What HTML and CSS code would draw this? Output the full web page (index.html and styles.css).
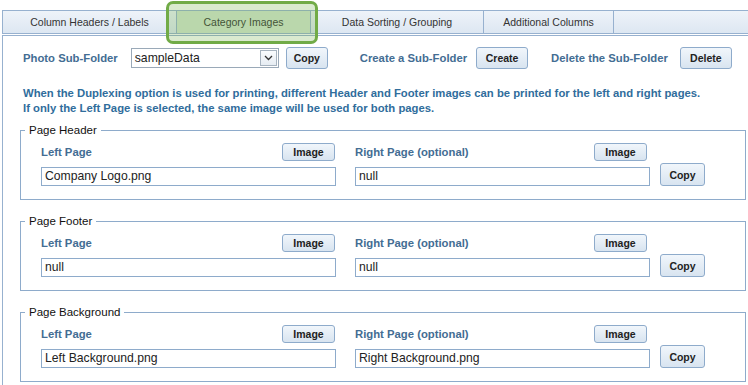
FILE: index.html
```html
<!DOCTYPE html>
<html lang="en">
<head>
  <meta charset="UTF-8" />
  <title>Category Images</title>
  <link rel="stylesheet" href="styles.css">
</head>
<body>
  <div class="wrap">
    <ul class="tabs">
      <li class="tab tab-1">Column Headers / Labels</li>
      <li class="tab tab-2 active">Category Images</li>
      <li class="tab tab-3">Data Sorting / Grouping</li>
      <li class="tab tab-4">Additional Columns</li>
    </ul>

    <div class="content">
      <div class="folder-row">
        <span class="label">Photo Sub-Folder</span>
        <div class="select">
          <span class="select-text">sampleData</span>
          <span class="select-arrow">
            <svg width="9" height="6" viewBox="0 0 9 6"><path d="M1 1 L4.5 4.5 L8 1" fill="none" stroke="#333" stroke-width="1.3"/></svg>
          </span>
        </div>
        <button class="btn btn-copy-folder">Copy</button>
        <span class="label create-label">Create a Sub-Folder</span>
        <button class="btn btn-create">Create</button>
        <span class="label delete-label">Delete the Sub-Folder</span>
        <button class="btn btn-delete">Delete</button>
      </div>

      <p class="info">
        When the Duplexing option is used for printing, different Header and Footer images can be printed for the left and right pages.<br>
        If only the Left Page is selected, the same image will be used for both pages.
      </p>

      <fieldset class="group">
        <legend>Page Header</legend>
        <div class="group-row">
          <div class="col">
            <div class="col-head"><span class="label">Left Page</span><button class="btn btn-image">Image</button></div>
            <div class="text-input">Company Logo.png</div>
          </div>
          <div class="col col-right">
            <div class="col-head"><span class="label">Right Page (optional)</span><button class="btn btn-image">Image</button></div>
            <div class="text-input">null</div>
          </div>
          <button class="btn btn-copy">Copy</button>
        </div>
      </fieldset>

      <fieldset class="group">
        <legend>Page Footer</legend>
        <div class="group-row">
          <div class="col">
            <div class="col-head"><span class="label">Left Page</span><button class="btn btn-image">Image</button></div>
            <div class="text-input">null</div>
          </div>
          <div class="col col-right">
            <div class="col-head"><span class="label">Right Page (optional)</span><button class="btn btn-image">Image</button></div>
            <div class="text-input">null</div>
          </div>
          <button class="btn btn-copy">Copy</button>
        </div>
      </fieldset>

      <fieldset class="group">
        <legend>Page Background</legend>
        <div class="group-row">
          <div class="col">
            <div class="col-head"><span class="label">Left Page</span><button class="btn btn-image">Image</button></div>
            <div class="text-input">Left Background.png</div>
          </div>
          <div class="col col-right">
            <div class="col-head"><span class="label">Right Page (optional)</span><button class="btn btn-image">Image</button></div>
            <div class="text-input">Right Background.png</div>
          </div>
          <button class="btn btn-copy">Copy</button>
        </div>
      </fieldset>
    </div>
  </div>

  <!-- highlight around the selected tab -->
  <div class="tab-highlight"></div>
</body>
</html>
```

FILE: styles.css
```css
* {
  box-sizing: border-box;
}

body {
  margin: 0;
  font-family: 'Liberation Sans', Arial, sans-serif;
  background: #fff;
  color: #222;
  overflow: hidden;
}

.wrap {
  margin-left: 2px;
  padding-top: 10px;
}

.tabs {
  list-style: none;
  margin: 0;
  padding: 0;
  display: flex;
  height: 24px;
  background: linear-gradient(to bottom, #eef3f9, #dde7f2);
  border-top: 1px solid #97b1cf;
  border-bottom: 1px solid #97b1cf;
  border-left: 1px solid #97b1cf;
}

.tab {
  font-size: 10.5px;
  color: #333;
  text-align: center;
  line-height: 22px;
  border-right: 1px solid #97b1cf;
}

.tab-1 { width: 174px; }
.tab-2 { width: 134px; }
.tab-3 { width: 173px; }
.tab-4 { width: 130px; }

.tab.active {
  background: #d4e6d0;
  color: #333;
}

.tab-highlight {
  position: absolute;
  left: 166px;
  top: 1px;
  width: 152px;
  height: 43px;
  border: 3px solid #71ab47;
  border-radius: 7px;
  background: rgba(112, 173, 71, 0.26);
}

.content {
  margin-top: 1px;
  border-top: 1px solid #97b1cf;
  border-left: 1px solid #97b1cf;
  padding: 11px 2px 4px 20px;
}

.label {
  font-size: 11.3px;
  font-weight: bold;
  color: #436d93;
  white-space: nowrap;
  flex-shrink: 0;
}

.folder-row {
  display: flex;
  align-items: center;
  height: 21px;
}

.select {
  margin-left: 13px;
  width: 148px;
  height: 20px;
  border: 1px solid #9aa9b8;
  display: flex;
  align-items: center;
  justify-content: space-between;
  padding-left: 3px;
  font-size: 12.2px;
  color: #222;
  flex-shrink: 0;
}

.select-arrow {
  width: 17px;
  height: 16px;
  margin-right: 1px;
  border: 1px solid #a7b3bf;
  background: linear-gradient(to bottom, #fafcfe, #e6ecf2);
  display: flex;
  align-items: center;
  justify-content: center;
}

.btn {
  font-family: 'Liberation Sans', Arial, sans-serif;
  font-size: 10.5px;
  font-weight: bold;
  color: #222;
  background: linear-gradient(to bottom, #f1f6fb, #d8e4f0);
  border: 1px solid #8eabcb;
  border-radius: 3px;
  padding: 0;
  height: 21px;
  flex-shrink: 0;
}

.btn-copy-folder { margin-left: 7px; width: 42px; height: 22px; }
.create-label { margin-left: 32px; }
.btn-create { margin-left: 9px; width: 52px; height: 22px; }
.delete-label { margin-left: 23px; }
.btn-delete { margin-left: 12px; width: 52px; height: 22px; }

.info {
  margin: 18px 0 7px;
  font-size: 11.3px;
  font-weight: bold;
  line-height: 15px;
  color: #306d9c;
}

.group {
  margin: 0 0 14px -3px;
  padding: 5px 0 13px 0;
  border: 1px solid #8eabcb;
}

.group legend {
  margin-left: 4px;
  padding: 0 4px;
  font-size: 11.5px;
  line-height: 15px;
  color: #111;
}

.group-row {
  display: flex;
  align-items: flex-end;
  padding-left: 20px;
}

.col {
  width: 295px;
}

.col-right {
  margin-left: 19px;
}

.col-head {
  display: flex;
  align-items: center;
  justify-content: space-between;
  height: 18px;
  padding-right: 1px;
  margin-bottom: 6px;
}

.col-right .col-head {
  padding-right: 3px;
}

.btn-image {
  width: 53px;
  height: 18px;
}

.text-input {
  height: 19px;
  border: 1px solid #8eabcb;
  font-size: 12.2px;
  line-height: 17px;
  padding-left: 3px;
  color: #222;
  white-space: nowrap;
}

.btn-copy {
  margin-left: 10px;
  margin-bottom: 0;
  width: 45px;
  height: 23px;
}
```
